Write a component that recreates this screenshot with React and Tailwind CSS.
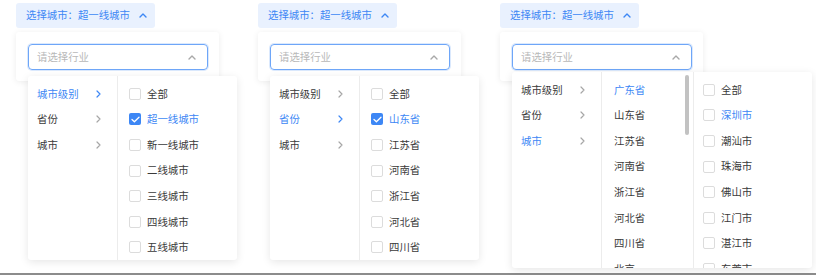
import React from "react";

const BLUE = "text-[#3d87f5]";

function CaretUp({ className }) {
  return (
    <svg width="8" height="5" viewBox="0 0 8 5" className={className}>
      <path d="M1 4 L4 1 L7 4" fill="none" stroke="currentColor" strokeWidth="1.4" strokeLinecap="round" strokeLinejoin="round" />
    </svg>
  );
}

function Chevron({ active }) {
  return (
    <svg width="5" height="8" viewBox="0 0 5 8" className={active ? "text-[#3d87f5]" : "text-[#a6a6a6]"}>
      <path d="M1 1 L4 4 L1 7" fill="none" stroke="currentColor" strokeWidth="1.2" strokeLinecap="round" strokeLinejoin="round" />
    </svg>
  );
}

function Box({ checked }) {
  if (checked) {
    return (
      <span className="w-[12px] h-[12px] rounded-[2px] bg-[#3d87f5] flex items-center justify-center shrink-0">
        <svg width="9" height="7" viewBox="0 0 9 7">
          <path d="M1 3.5 L3.4 5.8 L8 1.2" fill="none" stroke="white" strokeWidth="1.3" strokeLinecap="round" strokeLinejoin="round" />
        </svg>
      </span>
    );
  }
  return <span className="w-[12px] h-[12px] rounded-[2px] border border-[#dcdcdc] bg-white shrink-0" />;
}

// one row of the first column
function LevelRow({ label, active, blueArrow }) {
  return (
    <div className="h-[25.6px] flex items-center justify-between pl-[9px] pr-[16px]">
      <span className={active ? BLUE : "text-[#3a3a3a]"}>{label}</span>
      <Chevron active={active && blueArrow} />
    </div>
  );
}

function CheckRow({ label, checked, blue, pl = "pl-[11px]" }) {
  return (
    <div className={`h-[25.6px] flex items-center gap-[6px] ${pl}`}>
      <Box checked={checked} />
      <span className={checked || blue ? BLUE : "text-[#3a3a3a]"}>{label}</span>
    </div>
  );
}

const levels = ["城市级别", "省份", "城市"];

function Panel({ active, children, top = "top-[76px]", blueArrow = true }) {
  return (
    <div className="relative w-[242px] shrink-0 pt-[3px]">
      <button className="w-[139px] h-[25px] rounded-[3px] bg-[#e9f1fe] flex items-center pl-[10px] gap-[9px] text-[#3d87f5]">
        <span>选择城市：超一线城市</span>
        <CaretUp />
      </button>
      <div className="mt-[4px] w-[203px] h-[49px] bg-white rounded-[3px] shadow-[0_1px_6px_rgba(0,0,0,0.08)] pt-[12px] pl-[12px]">
        <div className="w-[180px] h-[26px] rounded-[4px] border border-[#6ea6f8] shadow-[0_0_0_1px_rgba(110,166,248,0.25)] flex items-center justify-between pl-[8px] pr-[11px]">
          <span className="text-[#b8b8b8]">请选择行业</span>
          <CaretUp className="text-[#a8a8a8]" />
        </div>
      </div>
      <div className={`absolute left-[12px] ${top} bg-white rounded-[3px] shadow-[0_2px_8px_rgba(0,0,0,0.1)] flex overflow-hidden`}>
        <div className="w-[90px] pt-[5px] border-r border-[#ececec]">
          {levels.map((l, i) => (
            <LevelRow key={l} label={l} active={i === active} blueArrow={blueArrow} />
          ))}
        </div>
        {children}
      </div>
    </div>
  );
}

export default function App() {
  const cities = ["超一线城市", "新一线城市", "二线城市", "三线城市", "四线城市", "五线城市"];
  const provinces = ["山东省", "江苏省", "河南省", "浙江省", "河北省", "四川省"];
  const provList = ["广东省", "山东省", "江苏省", "河南省", "浙江省", "河北省", "四川省", "北京"];
  const gdCities = ["深圳市", "潮汕市", "珠海市", "佛山市", "江门市", "湛江市", "东莞市"];

  return (
    <div
      className="w-[816px] h-[275px] bg-white flex flex-col text-[10.4px] leading-none overflow-hidden"
      style={{ fontFamily: '"Noto Sans CJK SC", "Noto Sans", sans-serif' }}
    >
      <div className="flex pl-[16px] h-[273px]">
        <Panel active={0}>
          <div className="w-[119px] pt-[5px]">
            <CheckRow label="全部" />
            {cities.map((c, i) => (
              <CheckRow key={c} label={c} checked={i === 0} />
            ))}
          </div>
        </Panel>

        <Panel active={1}>
          <div className="w-[119px] pt-[5px]">
            <CheckRow label="全部" />
            {provinces.map((c, i) => (
              <CheckRow key={c} label={c} checked={i === 0} />
            ))}
          </div>
        </Panel>

        <Panel active={2} top="top-[72px]" blueArrow={false}>
          <div className="relative w-[92px] h-[196px] pt-[5px] border-r border-[#ececec]">
            {provList.map((p, i) => (
              <div key={p} className="h-[25.6px] flex items-center pl-[12px]">
                <span className={i === 0 ? BLUE : "text-[#3a3a3a]"}>{p}</span>
              </div>
            ))}
            <div className="absolute right-[4px] top-[3px] w-[4px] h-[60px] rounded-full bg-[#c2c2c2]" />
          </div>
          <div className="w-[118px] h-[196px] pt-[5px]">
            <CheckRow label="全部" pl="pl-[9px]" />
            {gdCities.map((c, i) => (
              <CheckRow key={c} label={c} blue={i === 0} pl="pl-[9px]" />
            ))}
          </div>
        </Panel>
      </div>
      <div className="h-[2px] bg-[#8c8c8c]" />
    </div>
  );
}
